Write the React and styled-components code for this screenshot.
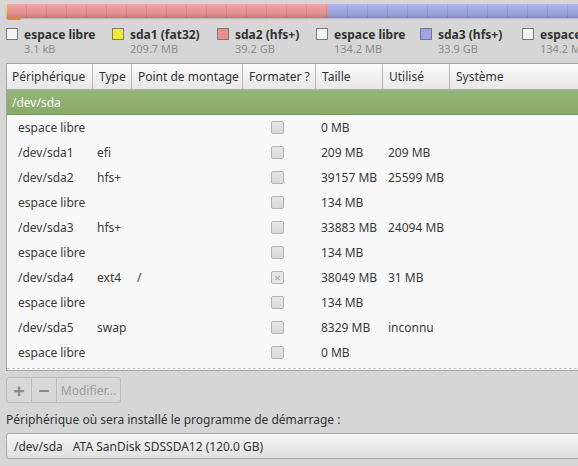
import styled, { createGlobalStyle } from 'styled-components';

const GlobalStyle = createGlobalStyle`
  html, body {
    margin: 0;
    background: #d6d6d6;
  }
  body {
    font-family: "Noto Sans", "Open Sans", sans-serif;
    font-size: 12px;
    color: #3a3a3a;
  }
`;

const legend = [
  { label: 'espace libre', size: '3.1 kB', color: '#f4f4f4', width: 106 },
  { label: 'sda1 (fat32)', size: '209.7 MB', color: '#eded2a', width: 105 },
  { label: 'sda2 (hfs+)', size: '39.2 GB', color: '#ee8c8c', width: 99 },
  { label: 'espace libre', size: '134.2 MB', color: '#f4f4f4', width: 104 },
  { label: 'sda3 (hfs+)', size: '33.9 GB', color: '#9ca4ea', width: 102 },
  { label: 'espace libre', size: '134.2 MB', color: '#f4f4f4', width: 106 },
];

const columns = [
  { title: 'Périphérique', width: 85 },
  { title: 'Type', width: 39 },
  { title: 'Point de montage', width: 111 },
  { title: 'Formater ?', width: 73 },
  { title: 'Taille', width: 67 },
  { title: 'Utilisé', width: 67 },
  { title: 'Système', width: 140 },
];

const rows = [
  { dev: 'espace libre', size: '0 MB' },
  { dev: '/dev/sda1', type: 'efi', size: '209 MB', used: '209 MB' },
  { dev: '/dev/sda2', type: 'hfs+', size: '39157 MB', used: '25599 MB' },
  { dev: 'espace libre', size: '134 MB' },
  { dev: '/dev/sda3', type: 'hfs+', size: '33883 MB', used: '24094 MB' },
  { dev: 'espace libre', size: '134 MB' },
  { dev: '/dev/sda4', type: 'ext4', mount: '/', size: '38049 MB', used: '31 MB', format: true },
  { dev: 'espace libre', size: '134 MB' },
  { dev: '/dev/sda5', type: 'swap', size: '8329 MB', used: 'inconnu' },
  { dev: 'espace libre', size: '0 MB' },
];

const App = () => {
  return (
    <Page>
      <GlobalStyle />
      <DiskBar>
        <Segment $color="#e6e62e" $width={1} />
        <Segment $color="#ee9696" $width={321} />
        <Segment $color="#a3aaea" $width={300} />
        <FreeMark />
      </DiskBar>

      <Legend>
        {legend.map((item, i) => (
          <LegendItem key={i} $width={item.width}>
            <Swatch $color={item.color} />
            <LegendText>
              <LegendLabel>{item.label}</LegendLabel>
              <LegendSize>{item.size}</LegendSize>
            </LegendText>
          </LegendItem>
        ))}
      </Legend>

      <Table>
        <HeaderRow>
          {columns.map((col) => (
            <HeaderCell key={col.title} $width={col.width}>{col.title}</HeaderCell>
          ))}
        </HeaderRow>
        <DiskRow>/dev/sda</DiskRow>
        <Body>
          {rows.map((row, i) => (
            <Row key={i}>
              <Cell $width={85} $pad={11}>{row.dev}</Cell>
              <Cell $width={39} $pad={5}>{row.type}</Cell>
              <Cell $width={111} $pad={6}>{row.mount}</Cell>
              <CheckCell $width={73}>
                <Check $checked={row.format}>{row.format ? '×' : ''}</Check>
              </CheckCell>
              <Cell $width={67} $pad={6}>{row.size}</Cell>
              <Cell $width={67} $pad={6}>{row.used}</Cell>
              <Cell $width={140} $pad={6} />
            </Row>
          ))}
        </Body>
      </Table>

      <Toolbar>
        <ToolButton $width={26} $icon>+</ToolButton>
        <ToolButton $width={25} $icon>−</ToolButton>
        <ToolButton $width={64}>Modifier...</ToolButton>
      </Toolbar>

      <BootLabel>Périphérique où sera installé le programme de démarrage :</BootLabel>

      <Combo>
        <span>/dev/sda</span>
        <ComboDetail>ATA SanDisk SDSSDA12 (120.0 GB)</ComboDetail>
      </Combo>
    </Page>
  );
};

const Page = styled.div`
  width: 578px;
  height: 466px;
  overflow: hidden;
  padding: 4px 0 0 6px;
  box-sizing: border-box;
`;

const DiskBar = styled.div`
  position: relative;
  display: flex;
  height: 14px;
  width: 640px;
  box-shadow: 0 1px 1px rgba(0, 0, 0, 0.15);
`;

const Segment = styled.div`
  flex: 0 0 ${(p) => p.$width}px;
  background-color: ${(p) => p.$color};
  background-image:
    linear-gradient(to bottom, rgba(255, 255, 255, 0.15), rgba(0, 0, 0, 0.08) 80%, rgba(0, 0, 0, 0.2)),
    repeating-linear-gradient(to right, transparent 0 19px, rgba(0, 0, 0, 0.08) 19px 20px);
`;

const FreeMark = styled.div`
  position: absolute;
  left: 1px;
  bottom: -2px;
  width: 14px;
  height: 3px;
  background: #d9873a;
  border-radius: 0 0 2px 2px;
`;

const Legend = styled.div`
  display: flex;
  margin-top: 9px;
  white-space: nowrap;
`;

const LegendItem = styled.div`
  flex: 0 0 ${(p) => p.$width}px;
  display: flex;
  align-items: flex-start;
  gap: 6px;
`;

const Swatch = styled.div`
  width: 10px;
  height: 10px;
  margin-top: 1px;
  border: 1px solid #7a7a7a;
  background: ${(p) => p.$color};
  flex: none;
`;

const LegendText = styled.div`
  display: flex;
  flex-direction: column;
`;

const LegendLabel = styled.span`
  font-weight: bold;
  line-height: 15px;
  color: #333;
`;

const LegendSize = styled.span`
  font-size: 11px;
  line-height: 14px;
  color: #8c8c8c;
`;

const Table = styled.div`
  margin-top: 7px;
  width: 600px;
  border: 1px solid #a4a4a4;
  border-right: none;
  background: #f8f8f8;
`;

const HeaderRow = styled.div`
  display: flex;
  height: 25px;
  background: linear-gradient(to bottom, #fbfbfb, #e8e8e8);
  border-bottom: 1px solid #b0b0b0;
`;

const HeaderCell = styled.div`
  flex: 0 0 ${(p) => p.$width}px;
  box-sizing: border-box;
  display: flex;
  align-items: center;
  padding-left: 6px;
  border-left: 1px solid #b8b8b8;
  color: #333;
  white-space: nowrap;
  &:first-child {
    border-left: none;
    padding-left: 5px;
  }
`;

const DiskRow = styled.div`
  height: 24px;
  display: flex;
  align-items: center;
  padding-left: 5px;
  color: #fff;
  background: linear-gradient(to bottom, #97b67a, #89a96a);
  border-bottom: 1px solid #7a985c;
`;

const Body = styled.div`
  padding-bottom: 3px;
  border-bottom: 1px dashed #c4c4c4;
  margin-bottom: 1px;
`;

const Row = styled.div`
  display: flex;
  height: 25px;
  align-items: center;
`;

const Cell = styled.div`
  flex: 0 0 ${(p) => p.$width}px;
  box-sizing: border-box;
  padding-left: ${(p) => p.$pad}px;
  white-space: nowrap;
`;

const CheckCell = styled.div`
  flex: 0 0 ${(p) => p.$width}px;
  display: flex;
  padding-left: 29px;
  box-sizing: border-box;
`;

const Check = styled.div`
  width: 11px;
  height: 11px;
  border: 1px solid #b4b4b4;
  border-radius: 2px;
  background: ${(p) => (p.$checked ? '#e8e8e8' : 'linear-gradient(to bottom, #e6e6e6, #dadada)')};
  color: #b0b0b0;
  font-size: 11px;
  line-height: 11px;
  text-align: center;
  font-weight: bold;
`;

const Toolbar = styled.div`
  display: flex;
  margin-top: 6px;
  height: 26px;
`;

const ToolButton = styled.div`
  width: ${(p) => p.$width}px;
  box-sizing: border-box;
  display: flex;
  align-items: center;
  justify-content: center;
  color: ${(p) => (p.$icon ? '#8a8a8a' : '#9c9c9c')};
  font-size: ${(p) => (p.$icon ? '20px' : '12px')};
  font-weight: ${(p) => (p.$icon ? 'bold' : 'normal')};
  border: 1px solid #bcbcbc;
  border-left: none;
  background: #d8d8d8;
  &:first-child {
    border-left: 1px solid #bcbcbc;
    border-radius: 3px 0 0 3px;
  }
  &:last-child {
    border-radius: 0 3px 3px 0;
  }
`;

const BootLabel = styled.div`
  margin-top: 9px;
  line-height: 16px;
  color: #333;
`;

const Combo = styled.div`
  margin-top: 5px;
  height: 26px;
  width: 600px;
  box-sizing: border-box;
  display: flex;
  align-items: center;
  padding-left: 7px;
  border: 1px solid #a8a8a8;
  border-radius: 3px;
  background: linear-gradient(to bottom, #f6f6f6, #e0e0e0);
  color: #333;
`;

const ComboDetail = styled.span`
  margin-left: 10px;
`;

export default App;
